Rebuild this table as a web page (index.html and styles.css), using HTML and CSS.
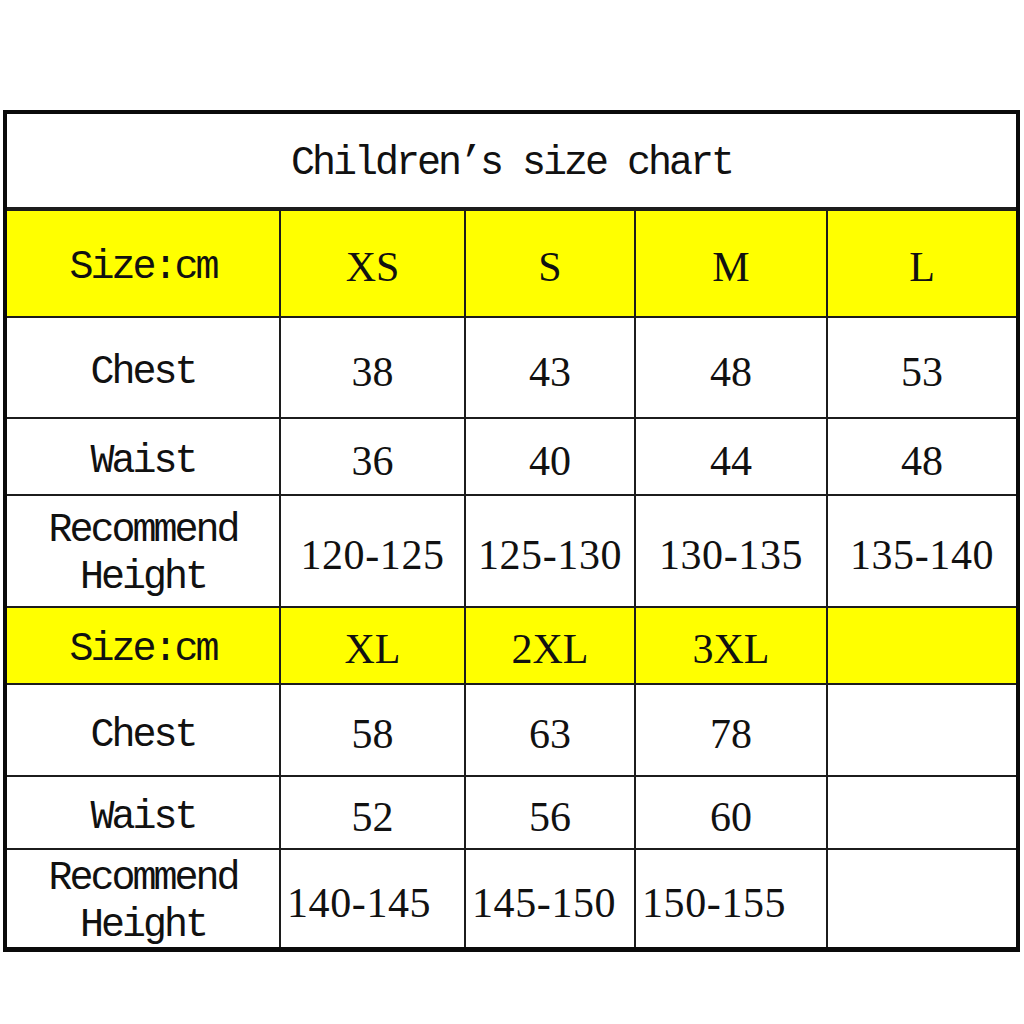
FILE: index.html
```html
<!DOCTYPE html>
<html>
<head>
<meta charset="utf-8">
<link rel="stylesheet" href="styles.css">
</head>
<body>
<div class="chart">
  <div class="title">Children’s size chart</div>

  <div class="cell head label">Size:cm</div>
  <div class="cell head num">XS</div>
  <div class="cell head num">S</div>
  <div class="cell head num">M</div>
  <div class="cell head num">L</div>

  <div class="cell label">Chest</div>
  <div class="cell num">38</div>
  <div class="cell num">43</div>
  <div class="cell num">48</div>
  <div class="cell num">53</div>

  <div class="cell label">Waist</div>
  <div class="cell num">36</div>
  <div class="cell num">40</div>
  <div class="cell num">44</div>
  <div class="cell num">48</div>

  <div class="cell label two">Recommend<br>Height</div>
  <div class="cell num range">120-125</div>
  <div class="cell num range">125-130</div>
  <div class="cell num range">130-135</div>
  <div class="cell num range">135-140</div>

  <div class="cell head label">Size:cm</div>
  <div class="cell head num">XL</div>
  <div class="cell head num">2XL</div>
  <div class="cell head num">3XL</div>
  <div class="cell head"></div>

  <div class="cell label">Chest</div>
  <div class="cell num">58</div>
  <div class="cell num">63</div>
  <div class="cell num">78</div>
  <div class="cell"></div>

  <div class="cell label">Waist</div>
  <div class="cell num">52</div>
  <div class="cell num">56</div>
  <div class="cell num">60</div>
  <div class="cell"></div>

  <div class="cell label two">Recommend<br>Height</div>
  <div class="cell num range left">140-145</div>
  <div class="cell num range left">145-150</div>
  <div class="cell num range left">150-155</div>
  <div class="cell"></div>
</div>
</body>
</html>
```
FILE: styles.css
```css
html, body {
  margin: 0;
  padding: 0;
  background: #ffffff;
}

body {
  padding: 110px 0 0 3px;
}

.chart {
  width: 1009px;
  display: grid;
  grid-template-columns: 272px 183px 168px 190px 188px;
  grid-template-rows: 95px 105px 99px 75px 110px 75px 90px 71px 97px;
  gap: 2px;
  background: #1c1c1c;
  border: 4px solid #0a0a0a;
  border-bottom-width: 5px;
  color: #111;
}

.title {
  grid-column: 1 / -1;
  margin-bottom: 2px;
  background: #fff;
  display: flex;
  align-items: center;
  justify-content: center;
  font-family: "Liberation Mono", monospace;
  font-size: 40px;
  letter-spacing: -3px;
  padding-top: 6px;
  box-sizing: border-box;
}

.cell {
  background: #fff;
  display: flex;
  align-items: center;
  justify-content: center;
  text-align: center;
  padding-top: 10px;
  box-sizing: border-box;
}

.head {
  background: #ffff00;
  padding-top: 8px;
}

.label {
  font-family: "Liberation Mono", monospace;
  font-size: 40px;
  letter-spacing: -3px;
}

.two {
  line-height: 47px;
  padding-top: 6px;
}

.num {
  font-family: "Liberation Serif", serif;
  font-size: 42px;
  padding-top: 8px;
}

.head.num {
  padding-top: 6px;
}

.range {
  letter-spacing: 0.6px;
}

.left {
  justify-content: flex-start;
  padding-left: 6px;
}
```
